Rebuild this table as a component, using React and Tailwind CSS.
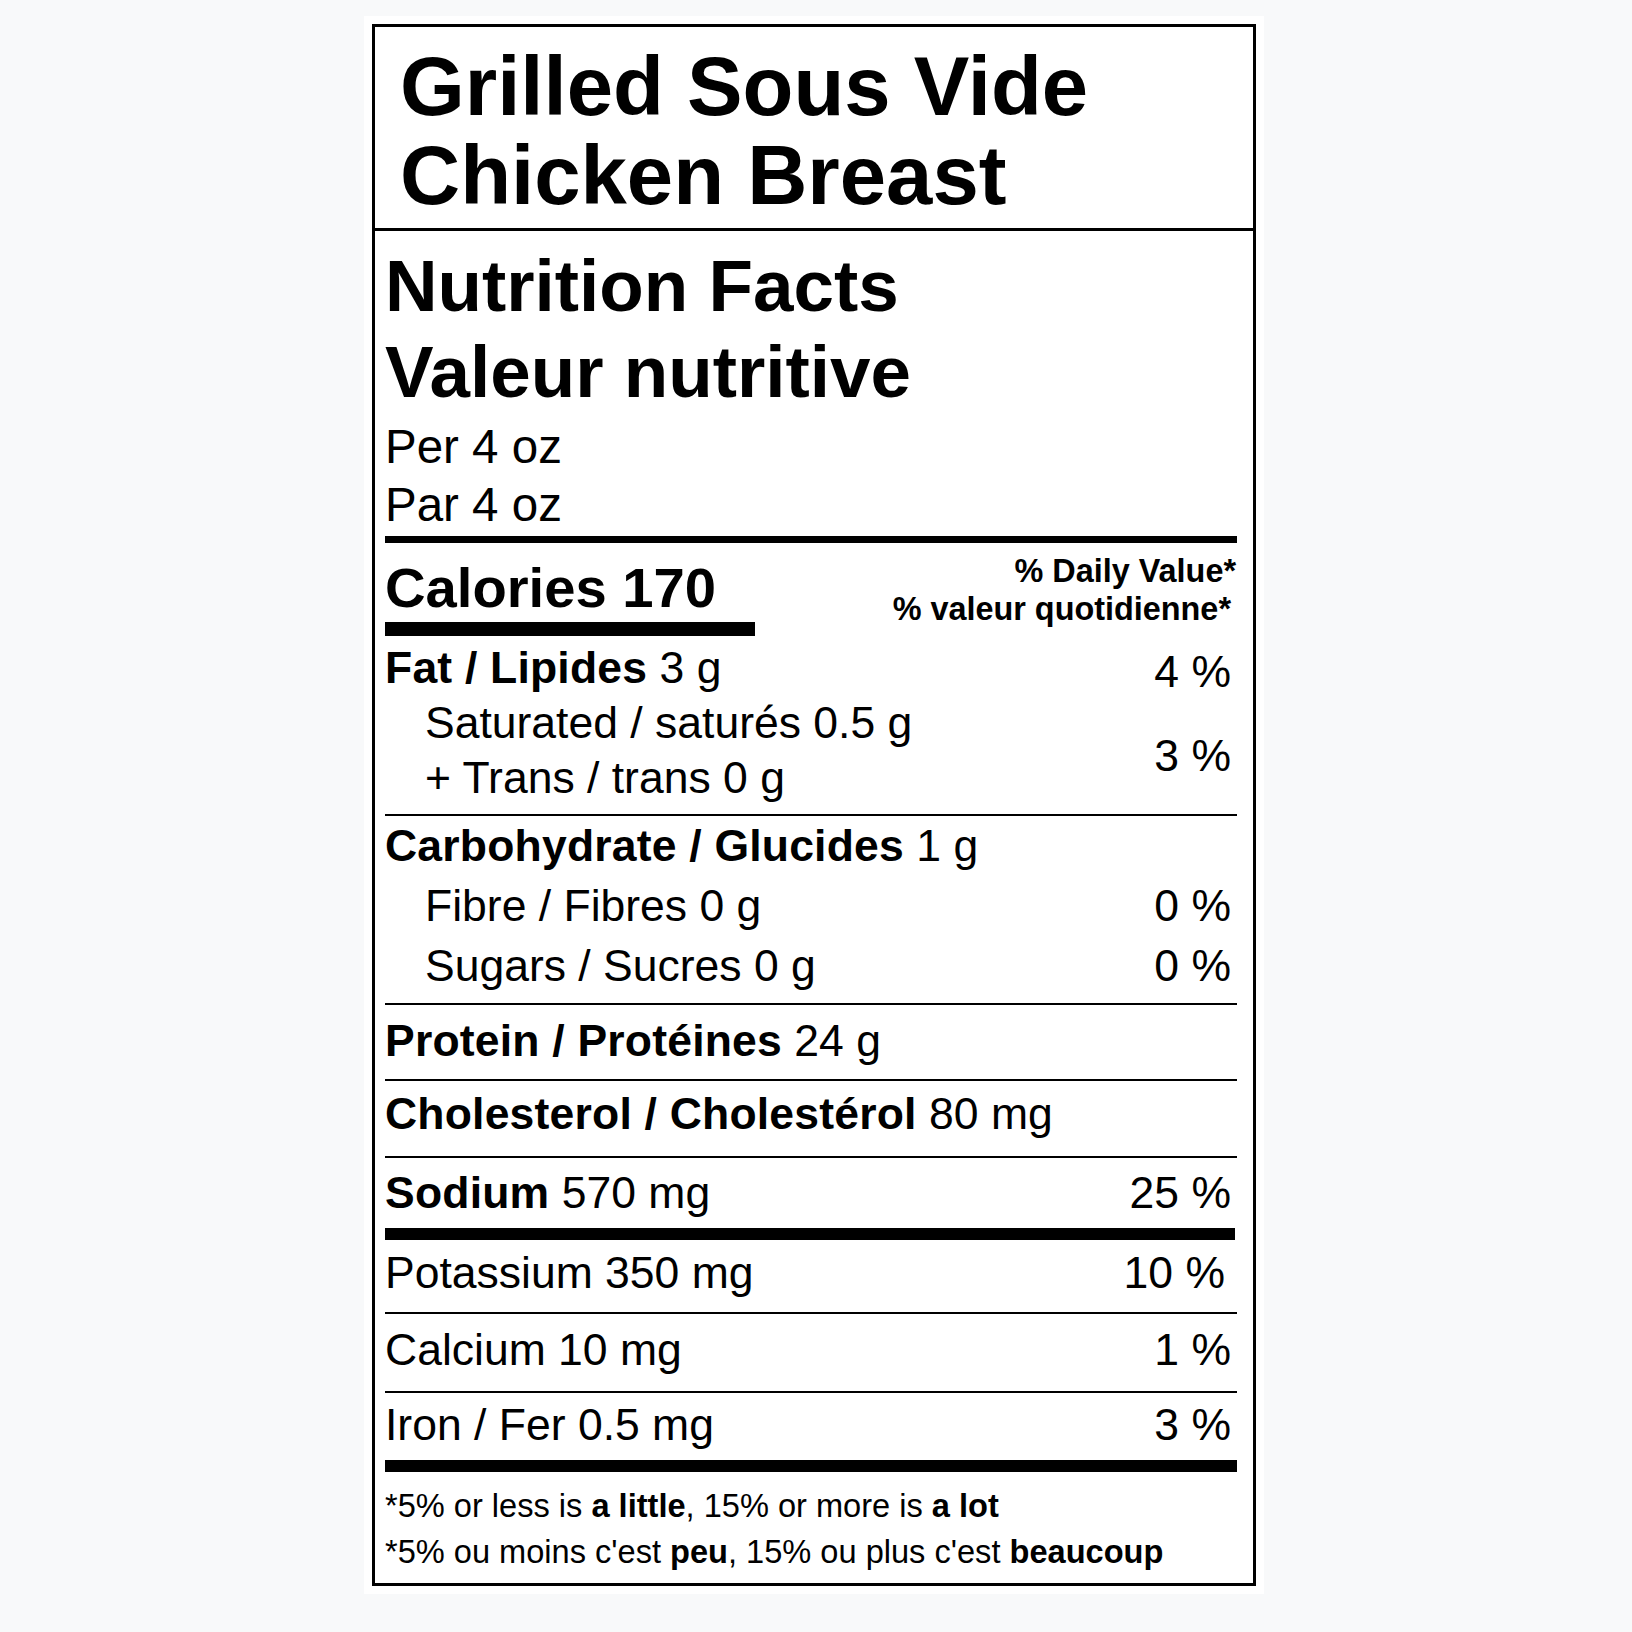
export default function App() {
  return (
    <div className="min-h-screen w-full bg-[#f8f9fa] pt-[16px] font-['Liberation_Sans',Arial,sans-serif] text-black">
      <div className="ml-[364px] w-[900px] bg-white p-[8px]">
        <div className="border-[3px] border-black">
          <div className="border-b-[3px] border-black pb-[8px] pl-[25px] pt-[15px]">
            <h1 className="text-[83.3px] font-bold leading-[89px]">
              Grilled Sous Vide
              <br />
              Chicken Breast
            </h1>
          </div>
          <div className="pl-[10px] pr-[16px] pt-[12px]">
            <div className="text-[72.8px] font-bold leading-[86px]">
              Nutrition Facts
              <br />
              Valeur nutritive
            </div>
            <div className="mt-[3px] text-[47.5px] leading-[58px]">
              Per 4 oz
              <br />
              Par 4 oz
            </div>
            <div className="mt-[2px] h-[7px] bg-black" />

            <div className="flex justify-between">
              <div className="pt-[13px]">
                <div className="text-[56.2px] font-bold leading-[64px]">Calories 170</div>
                <div className="mt-[2px] h-[14px] w-[370px] bg-black" />
              </div>
              <div className="pt-[9px] text-right text-[32.4px] font-bold leading-[38px]">
                <div className="pr-[1px]">% Daily Value*</div>
                <div className="pr-[6px]">% valeur quotidienne*</div>
              </div>
            </div>

            <div className="mt-[4px] grid grid-cols-[1fr_auto] pb-[9px] text-[44.5px] leading-[55px]">
              <div>
                <span className="font-bold tracking-[0.2px]">Fat / Lipides</span> 3 g
              </div>
              <div className="relative top-[4px] pr-[6px] text-right">4 %</div>
              <div className="pl-[40px]">Saturated / saturés 0.5 g</div>
              <div className="row-span-2 self-center pr-[6px] pt-[10px] text-right">3 %</div>
              <div className="pl-[40px]">+ Trans / trans 0 g</div>
            </div>
            <div className="h-[2px] bg-black" />

            <div className="pb-[7px] text-[44.5px] leading-[60px]">
              <div>
                <span className="font-bold tracking-[0.2px]">Carbohydrate / Glucides</span> 1 g
              </div>
              <div className="flex justify-between pl-[40px]">
                <span>Fibre / Fibres 0 g</span>
                <span className="pr-[6px]">0 %</span>
              </div>
              <div className="flex justify-between pl-[40px]">
                <span>Sugars / Sucres 0 g</span>
                <span className="pr-[6px]">0 %</span>
              </div>
            </div>
            <div className="h-[2px] bg-black" />

            <div className="pb-[8px] pt-[6px] text-[44.5px] leading-[60px]">
              <span className="font-bold tracking-[0.2px]">Protein / Protéines</span> 24 g
            </div>
            <div className="h-[2px] bg-black" />

            <div className="pb-[12px] pt-[3px] text-[44.5px] leading-[60px]">
              <span className="font-bold tracking-[0.2px]">Cholesterol / Cholestérol</span> 80 mg
            </div>
            <div className="h-[2px] bg-black" />

            <div className="flex justify-between pb-[5px] pt-[5px] text-[44.5px] leading-[60px]">
              <span>
                <span className="font-bold tracking-[0.2px]">Sodium</span> 570 mg
              </span>
              <span className="pr-[6px]">25 %</span>
            </div>
            <div className="mr-[2px] h-[12px] bg-black" />

            <div className="flex justify-between pb-[9px] pt-[3px] text-[44.5px] leading-[60px]">
              <span>Potassium 350 mg</span>
              <span className="pr-[12px]">10 %</span>
            </div>
            <div className="h-[2px] bg-black" />

            <div className="flex justify-between pb-[11px] pt-[6px] text-[44.5px] leading-[60px]">
              <span>Calcium 10 mg</span>
              <span className="pr-[6px]">1 %</span>
            </div>
            <div className="h-[2px] bg-black" />

            <div className="flex justify-between pb-[5px] pt-[2px] text-[44.5px] leading-[60px]">
              <span>Iron / Fer 0.5 mg</span>
              <span className="pr-[6px]">3 %</span>
            </div>
            <div className="h-[12px] bg-black" />

            <div className="pb-[8px] pt-[11px] text-[32.6px] leading-[46px]">
              <div>
                *5% or less is <span className="font-bold">a little</span>, 15% or more is{" "}
                <span className="font-bold">a lot</span>
              </div>
              <div>
                *5% ou moins c'est <span className="font-bold">peu</span>, 15% ou plus c'est{" "}
                <span className="font-bold">beaucoup</span>
              </div>
            </div>
          </div>
        </div>
      </div>
    </div>
  );
}
